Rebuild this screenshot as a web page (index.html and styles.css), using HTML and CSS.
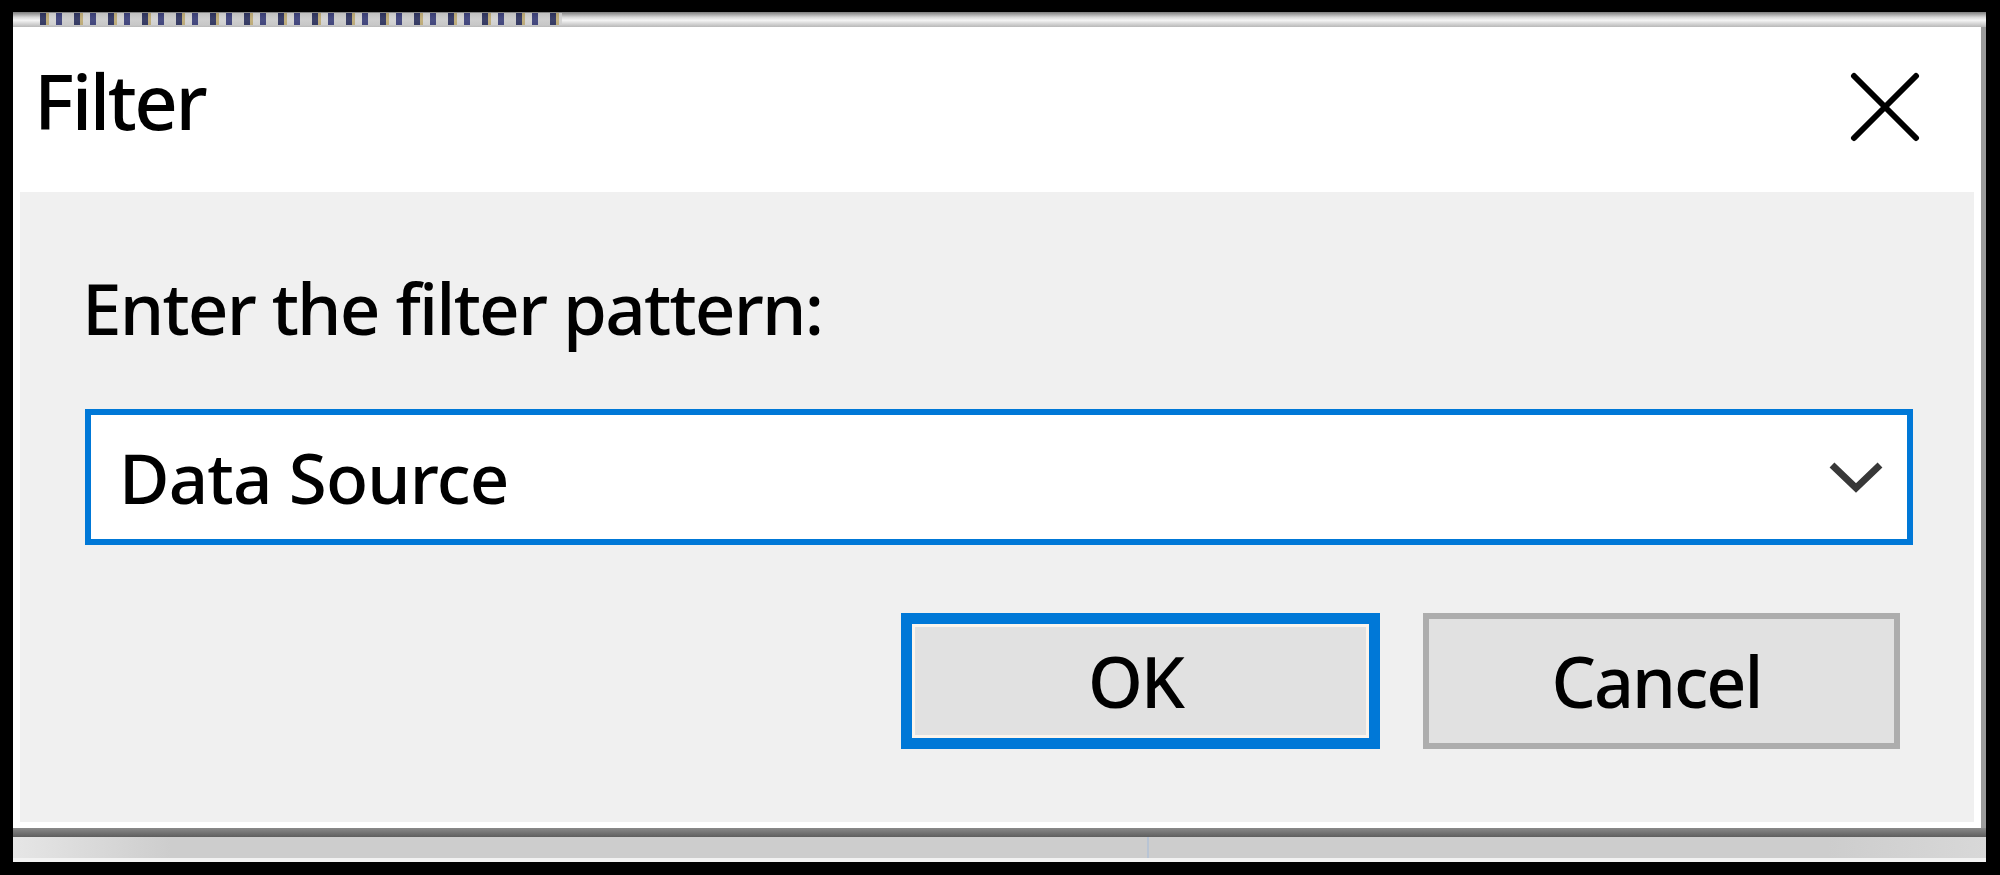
FILE: index.html
```html
<!DOCTYPE html>
<html>
<head>
<meta charset="utf-8">
<link rel="stylesheet" href="styles.css">
</head>
<body>
<div class="screen">
  <div class="parent-top"><div class="parent-ink"></div></div>
  <div class="dialog">
    <div class="titlebar">
      <div class="title">Filter</div>
      <svg class="close" viewBox="0 0 70 70" width="70" height="70">
        <path d="M4 4 L66 66 M66 4 L4 66" stroke="#000" stroke-width="6" stroke-linecap="round" fill="none"/>
      </svg>
    </div>
    <div class="body">
      <div class="label">Enter the filter pattern:</div>
      <div class="combo">
        <span class="combo-text">Data Source</span>
        <svg class="chevron" viewBox="0 0 56 38" width="56" height="38">
          <path d="M4 7 L28 30 L52 7" stroke="#383838" stroke-width="7" fill="none"/>
        </svg>
      </div>
      <div class="buttons">
        <div class="btn btn-default">OK</div>
        <div class="btn">Cancel</div>
      </div>
    </div>
  </div>
  <div class="parent-bottom">
    <div class="pb-dark"></div>
    <div class="pb-light"><div class="pb-sep"></div></div>
    <div class="pb-white"></div>
  </div>
</div>
</body>
</html>
```

FILE: styles.css
```css
html, body {
  margin: 0;
  padding: 0;
  background: #000;
}
body {
  width: 2000px;
  height: 875px;
  overflow: hidden;
  font-family: "Noto Sans", "Open Sans", sans-serif;
  font-weight: 500;
  color: #000;
}
.screen {
  box-sizing: border-box;
  height: 875px;
  padding: 12px 14px 13px 13px;
  display: flex;
  flex-direction: column;
}
.parent-top {
  height: 15px;
  background: linear-gradient(#7c7c7c, #d8d8d8 35%, #f4f4f4 55%, #b8b8b8);
}
.parent-ink {
  margin-left: 27px;
  width: 522px;
  height: 12px;
  margin-top: 1px;
  background: repeating-linear-gradient(90deg, #1b2150 0 6px, #b9a46a 6px 9px, #d0d0d0 9px 16px, #2a2f6e 16px 22px, #c7c7c7 22px 34px);
  opacity: 0.85;
}
.dialog {
  background: #fff;
  border-right: 5px solid #9c9c9c;
  display: flex;
  flex-direction: column;
  padding: 0 7px 6px 7px;
}
.titlebar {
  height: 165px;
  display: flex;
  align-items: flex-start;
  justify-content: space-between;
  margin: 0 -7px;
  padding: 0 61px 0 21px;
}
.title {
  font-size: 76px;
  line-height: 1;
  padding-top: 36px;
  letter-spacing: -2.5px;
}
.close {
  margin-top: 45px;
}
.body {
  background: #f0f0f0;
  height: 630px;
  box-sizing: border-box;
  padding: 80px 61px 0 65px;
  display: flex;
  flex-direction: column;
}
.label {
  font-size: 71px;
  line-height: 1;
  margin-left: -3px;
  letter-spacing: -1.8px;
}
.combo {
  margin-top: 66px;
  height: 136px;
  box-sizing: border-box;
  border: 6px solid #0078d7;
  background: #fff;
  display: flex;
  align-items: center;
  padding: 0 23px 0 28px;
}
.combo-text {
  font-size: 69px;
  line-height: 1;
  letter-spacing: -0.8px;
}
.chevron {
  margin-left: auto;
}
.buttons {
  margin-top: 68px;
  display: flex;
  justify-content: flex-end;
  gap: 43px;
  padding-right: 13px;
}
.btn {
  width: 477px;
  height: 136px;
  box-sizing: border-box;
  border: 6px solid #adadad;
  background: #e1e1e1;
  display: flex;
  align-items: center;
  justify-content: center;
  padding-right: 10px;
  font-size: 70px;
  line-height: 1;
  letter-spacing: -2px;
}
.btn-default {
  width: 479px;
  border: 11px solid #0078d7;
  box-shadow: inset 0 0 0 3px #fbf4ec;
}
.parent-bottom {
  display: flex;
  flex-direction: column;
}
.pb-dark {
  height: 9px;
  background: linear-gradient(#8a8a8a, #5e5e5e);
}
.pb-light {
  height: 21px;
  background: linear-gradient(90deg, #e6e6e6, #cdcdcd 8%, #cdcdcd 92%, #d8d8d8);
  display: flex;
  padding-left: 1134px;
}
.pb-sep {
  width: 2px;
  background: #b8c4d4;
}
.pb-white {
  height: 4px;
  background: #f2f2f2;
}
```
